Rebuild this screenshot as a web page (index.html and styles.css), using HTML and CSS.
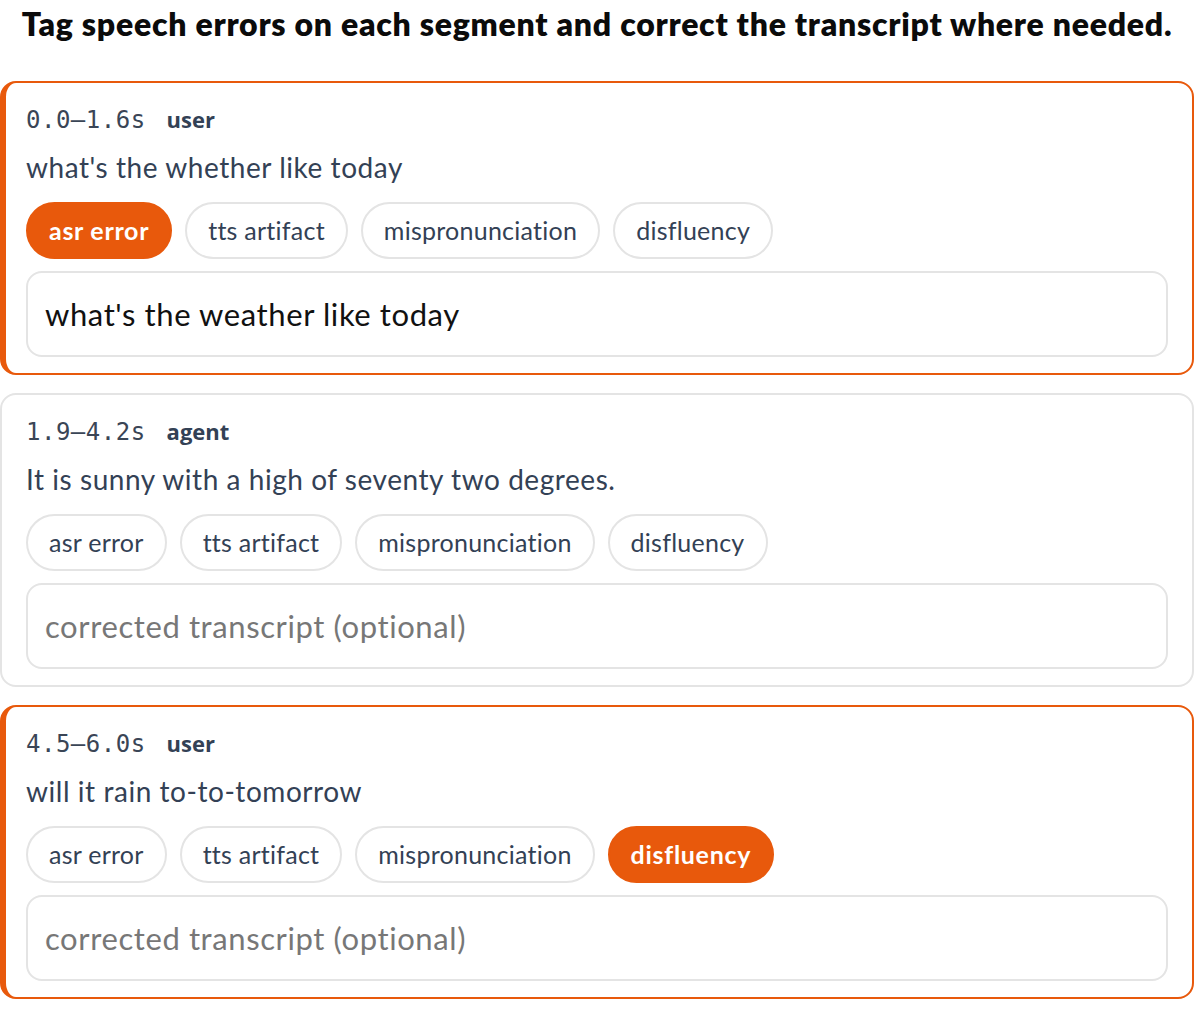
FILE: index.html
```html
<!DOCTYPE html>
<html lang="en">
<head>
<meta charset="utf-8">
<title>Tag speech errors</title>
<link rel="stylesheet" href="styles.css">
</head>
<body>
<h1 class="title">Tag speech errors on each segment and correct the transcript where needed.</h1>
<div class="segments">
  <section class="seg flagged">
    <div class="meta"><span class="time">0.0–1.6s</span><span class="role">user</span></div>
    <p class="text">what's the whether like today</p>
    <div class="chips">
      <button class="chip on">asr error</button>
      <button class="chip">tts artifact</button>
      <button class="chip">mispronunciation</button>
      <button class="chip">disfluency</button>
    </div>
    <input class="fix" type="text" value="what's the weather like today" placeholder="corrected transcript (optional)">
  </section>
  <section class="seg">
    <div class="meta"><span class="time">1.9–4.2s</span><span class="role">agent</span></div>
    <p class="text">It is sunny with a high of seventy two degrees.</p>
    <div class="chips">
      <button class="chip">asr error</button>
      <button class="chip">tts artifact</button>
      <button class="chip">mispronunciation</button>
      <button class="chip">disfluency</button>
    </div>
    <input class="fix" type="text" placeholder="corrected transcript (optional)">
  </section>
  <section class="seg flagged">
    <div class="meta"><span class="time">4.5–6.0s</span><span class="role">user</span></div>
    <p class="text">will it rain to-to-tomorrow</p>
    <div class="chips">
      <button class="chip">asr error</button>
      <button class="chip">tts artifact</button>
      <button class="chip">mispronunciation</button>
      <button class="chip on">disfluency</button>
    </div>
    <input class="fix" type="text" placeholder="corrected transcript (optional)">
  </section>
</div>
</body>
</html>
```

FILE: styles.css
```css
* { box-sizing: border-box; }
html, body { margin: 0; padding: 0; background: #fff; }
body {
  font-family: "Lato", "Noto Sans", sans-serif;
  color: #334155;
}
.title {
  margin: 0;
  padding: 6px 0 0;
  height: 81px;
  text-align: center;
  font-size: 32px;
  line-height: 36px;
  font-weight: 800;
  color: #0b0b0b;
  letter-spacing: 0.75px;
}
.segments {
  display: flex;
  flex-direction: column;
  gap: 18px;
}
.seg {
  height: 294px;
  border: 2px solid #e4e4e4;
  border-radius: 16px;
  padding: 20px 24px 16px 24px;
  display: flex;
  flex-direction: column;
}
.seg.flagged {
  border-color: #e8590c;
  border-left-width: 6px;
  padding-left: 20px;
}
.meta {
  display: flex;
  align-items: baseline;
  gap: 21px;
  height: 32px;
  line-height: 32px;
}
.time {
  font-family: "DejaVu Sans Mono", "Liberation Mono", monospace;
  font-size: 24px;
  color: #3a4556;
  letter-spacing: 0.5px;
}
.role {
  font-family: "Open Sans", "DejaVu Sans", sans-serif;
  font-weight: 700;
  font-size: 22px;
  color: #334155;
}
.text {
  margin: 12px 0 15px;
  font-size: 28px;
  line-height: 40px;
  color: #334155;
  letter-spacing: 0.55px;
}
.chips {
  display: flex;
  gap: 13px;
  margin-bottom: 12px;
}
.chip {
  font-family: "Lato", "Noto Sans", sans-serif;
  font-size: 25px;
  line-height: 39px;
  height: 57px;
  padding: 7px 21px;
  border: 2px solid #e4e4e4;
  border-radius: 999px;
  background: #fff;
  color: #334155;
  letter-spacing: 0.25px;
  cursor: pointer;
}
.chip.on {
  background: #e8590c;
  border-color: #e8590c;
  color: #fff;
  font-weight: 700;
  letter-spacing: 0.7px;
}
.fix {
  width: 100%;
  height: 86px;
  border: 2px solid #e4e4e4;
  border-radius: 16px;
  padding: 0 17px;
  font-family: "Lato", "Noto Sans", sans-serif;
  font-size: 31px;
  letter-spacing: 0.6px;
  color: #111;
  background: #fff;
  outline: none;
}
.fix::placeholder { color: #777; }
```
